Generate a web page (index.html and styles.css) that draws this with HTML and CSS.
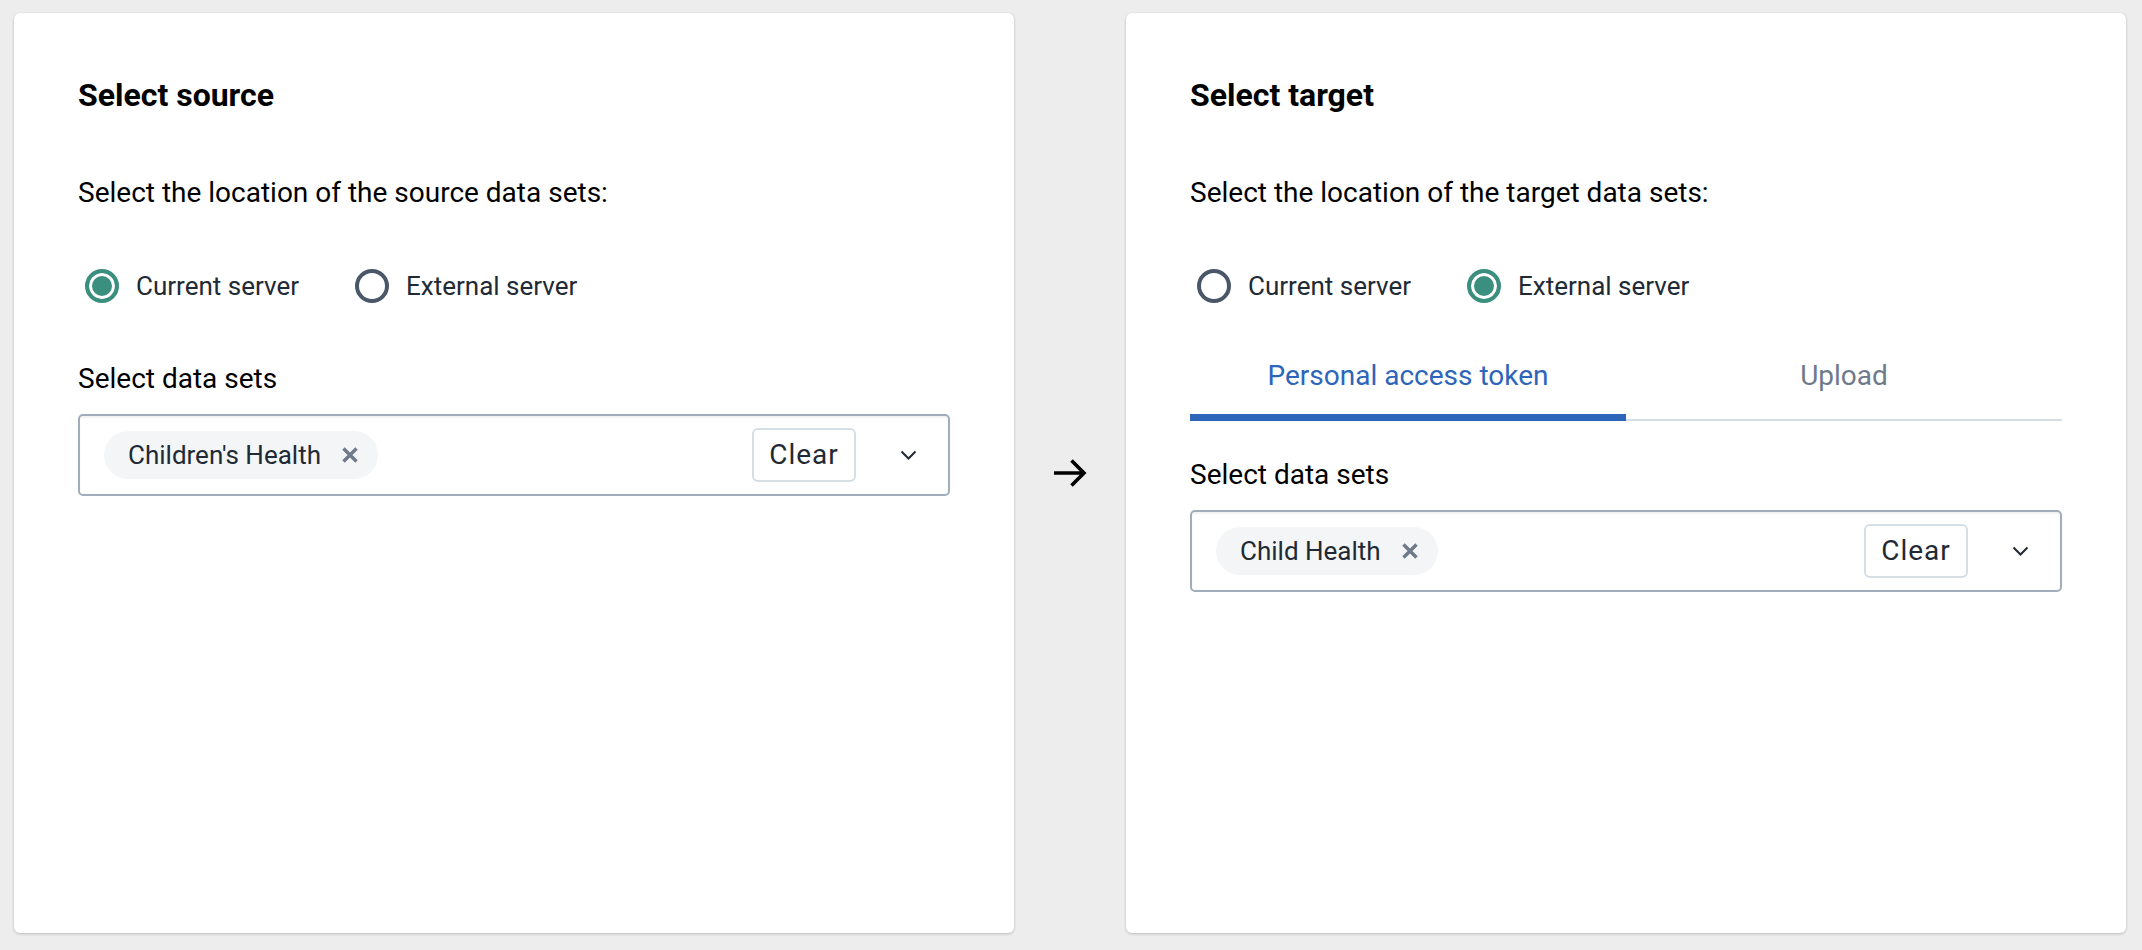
FILE: index.html
```html
<!DOCTYPE html>
<html lang="en">
<head>
<meta charset="utf-8">
<title>Select source and target</title>
<link rel="stylesheet" href="styles.css">
</head>
<body>
<div class="page">
  <section class="card">
    <h2 class="title">Select source</h2>
    <p class="desc">Select the location of the source data sets:</p>
    <div class="radios">
      <label class="radio"><span class="dot checked"></span><span>Current server</span></label>
      <label class="radio"><span class="dot"></span><span>External server</span></label>
    </div>
    <div class="field-label">Select data sets</div>
    <div class="select">
      <div class="chips">
        <span class="chip">Children's Health
          <svg class="chip-x" width="18" height="18" viewBox="0 0 18 18"><path d="M2.5 2.5 L15.5 15.5 M15.5 2.5 L2.5 15.5" stroke="#6e7a8a" stroke-width="3.4" fill="none"/></svg>
        </span>
      </div>
      <button class="clear" type="button">Clear</button>
      <svg class="chevron" width="17" height="10" viewBox="0 0 17 10"><path d="M1.5 1.5 L8.5 8.5 L15.5 1.5" stroke="#212934" stroke-width="2" fill="none"/></svg>
    </div>
  </section>

  <div class="between">
    <svg class="arrow" width="34" height="30" viewBox="0 0 34 30"><path d="M1 15 H31 M18.5 2.5 L31 15 L18.5 27.5" stroke="#000" stroke-width="3.6" fill="none"/></svg>
  </div>

  <section class="card">
    <h2 class="title">Select target</h2>
    <p class="desc">Select the location of the target data sets:</p>
    <div class="radios">
      <label class="radio"><span class="dot"></span><span>Current server</span></label>
      <label class="radio"><span class="dot checked"></span><span>External server</span></label>
    </div>
    <div class="tabs">
      <div class="tab active">Personal access token</div>
      <div class="tab">Upload</div>
    </div>
    <div class="field-label">Select data sets</div>
    <div class="select">
      <div class="chips">
        <span class="chip">Child Health
          <svg class="chip-x" width="18" height="18" viewBox="0 0 18 18"><path d="M2.5 2.5 L15.5 15.5 M15.5 2.5 L2.5 15.5" stroke="#6e7a8a" stroke-width="3.4" fill="none"/></svg>
        </span>
      </div>
      <button class="clear" type="button">Clear</button>
      <svg class="chevron" width="17" height="10" viewBox="0 0 17 10"><path d="M1.5 1.5 L8.5 8.5 L15.5 1.5" stroke="#212934" stroke-width="2" fill="none"/></svg>
    </div>
  </section>
</div>
</body>
</html>
```
FILE: styles.css
```css
* { box-sizing: border-box; }
html, body { margin: 0; }
body {
  background: #ededed;
  font-family: Roboto, "Noto Sans", "Liberation Sans", sans-serif;
}
.page {
  display: flex;
  height: 950px;
  padding: 13px 16px 17px 14px;
}
.card {
  width: 1000px;
  height: 920px;
  flex: none;
  background: #fff;
  border-radius: 6px;
  box-shadow: 0 1px 3px rgba(0, 0, 0, 0.2), 0 0 1px rgba(0, 0, 0, 0.08);
  padding: 63px 64px 0;
}
.between {
  width: 112px;
  flex: none;
  display: flex;
  align-items: center;
  justify-content: center;
}
.title {
  margin: 0;
  font-size: 32px;
  line-height: 38px;
  font-weight: 700;
  color: #000;
}
.desc {
  margin: 62px 0 0;
  font-size: 28px;
  line-height: 34px;
  color: #000;
}
.radios {
  display: flex;
  align-items: center;
  gap: 49px;
  height: 34px;
  margin-top: 59px;
  margin-bottom: 1px;
}
.radio {
  display: flex;
  align-items: center;
  gap: 17px;
  padding-left: 7px;
  font-size: 26px;
  line-height: 30px;
  color: #212934;
}
.dot {
  width: 34px;
  height: 34px;
  flex: none;
  border-radius: 50%;
  border: 4px solid #4a5768;
  background: #fff;
}
.dot.checked {
  border-color: #3b8f7e;
  background: #3b8f7e;
  box-shadow: inset 0 0 0 3px #fff;
}
.tabs {
  display: flex;
  margin-top: 36px;
  box-shadow: inset 0 -2px 0 #d5dde5;
}
.tab {
  flex: 1;
  text-align: center;
  padding: 20px 0 28px;
  font-size: 28px;
  line-height: 34px;
  color: #6e7a8a;
}
.tab.active {
  color: #2d65bb;
  box-shadow: inset 0 -7px 0 #2d65bb;
}
.field-label {
  margin-top: 59px;
  font-size: 28px;
  line-height: 34px;
  color: #000;
}
.tabs + .field-label { margin-top: 37px; }
.select {
  margin-top: 18px;
  height: 82px;
  border: 2px solid #a0adba;
  border-radius: 5px;
  box-shadow: inset 0 2px 2px rgba(0, 0, 0, 0.05);
  display: flex;
  align-items: center;
  padding: 0 31px 0 24px;
}
.chips {
  flex: 1;
  display: flex;
}
.chip {
  display: flex;
  align-items: center;
  gap: 20px;
  height: 48px;
  border-radius: 24px;
  background: #f3f5f7;
  padding: 0 19px 0 24px;
  font-size: 26px;
  color: #212934;
}
.chip-x { flex: none; }
.clear {
  width: 104px;
  height: 54px;
  margin-right: 44px;
  border: 2px solid #d5dde5;
  border-radius: 6px;
  background: #fff;
  font-family: inherit;
  font-size: 28px;
  letter-spacing: 1px;
  color: #212934;
  padding: 0 0 2px;
  display: flex;
  align-items: center;
  justify-content: center;
}
.chevron { flex: none; }
.arrow { display: block; }
```
